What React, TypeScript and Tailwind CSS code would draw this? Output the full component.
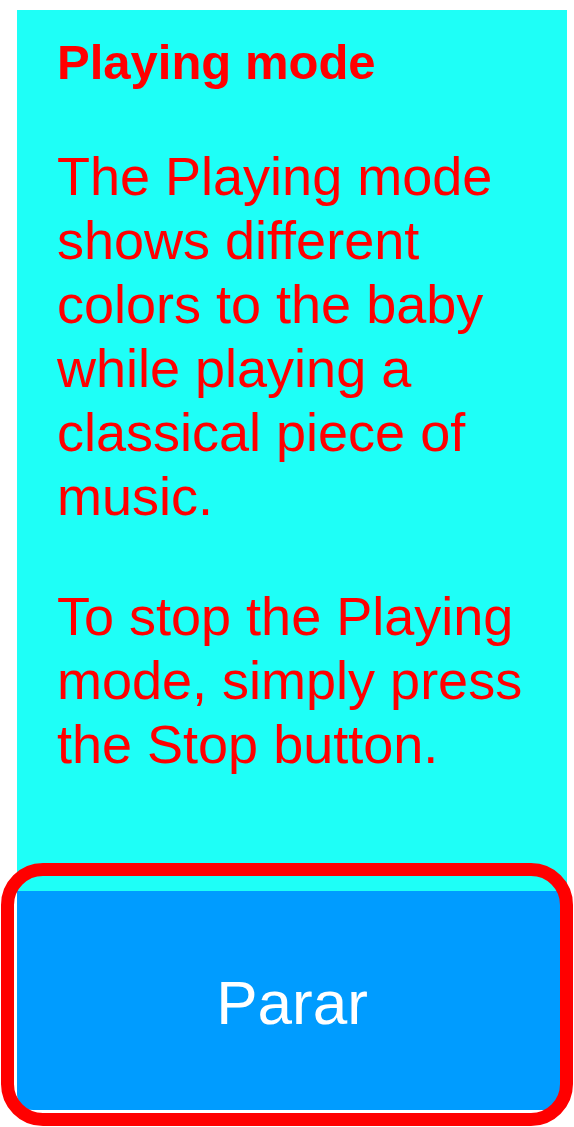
const font = "font-['Liberation_Sans',Arial,sans-serif]";

export default function App() {
  return (
    <main className={`relative min-h-[1127px] w-[574px] bg-white pt-[10px] ${font}`}>
      <section className="ml-[17px] w-[550px] bg-[#1efff7] px-[40px] pt-[23px] pb-[115px] text-[#ff0000]">
        <h1 className="text-[49px] font-bold leading-[59px]">Playing mode</h1>
        <p className="mt-[52px] text-[54px] leading-[64px]">
          The Playing mode shows different colors to the baby while playing a classical piece of music.
        </p>
        <p className="mt-[56px] text-[54px] leading-[64px]">
          To stop the Playing mode, simply press the Stop button.
        </p>
      </section>

      <button
        type="button"
        className="ml-[17px] flex h-[219px] w-[550px] items-center justify-center rounded-b-[16px] bg-[#009cff] pt-[4px] text-[62px] text-white"
      >
        Parar
      </button>

      {/* focus ring drawn over the button */}
      <div className="pointer-events-none absolute top-[863px] left-[1px] h-[263px] w-[572px] rounded-[42px] border-[13px] border-[#ff0000]" />
    </main>
  );
}
